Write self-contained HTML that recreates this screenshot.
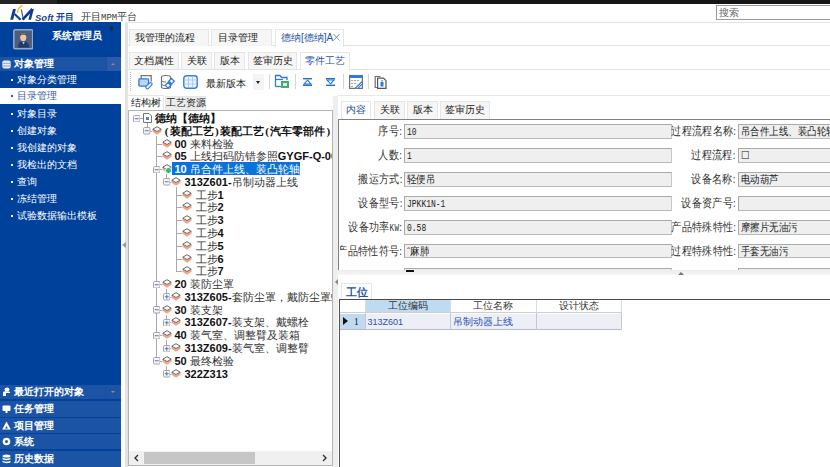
<!DOCTYPE html>
<html><head><meta charset="utf-8">
<style>
*{margin:0;padding:0;box-sizing:border-box}
html,body{width:830px;height:467px;overflow:hidden;background:#fff;font-family:"Liberation Sans",sans-serif;color:#222}
.a{position:absolute}
.sans{font-family:"Liberation Sans",sans-serif}
.serif{font-family:"Liberation Serif",serif}
#topbar{left:0;top:0;width:830px;height:4px;background:linear-gradient(90deg,#242424 0,#242424 57px,#161616 57px)}
#header{left:0;top:4px;width:830px;height:19px;background:#fff;border-bottom:1px solid #e4e4e4}
#side{left:0;top:22px;width:121px;height:445px;background:#00419b}
.sitem{left:0;width:121px;height:16px;color:#fff;font-size:9.5px;line-height:16px;padding-left:17px;white-space:nowrap}
.sitem:before{content:"";position:absolute;left:11px;top:7px;width:2px;height:2px;background:#fff}
.sitem.sel{background:#fff;color:#3a5aa8}
.sitem.sel:before{background:#3a5aa8}
.grp{left:0;width:121px;height:14px;background:#1c54a5;color:#fff;font-size:10px;font-weight:bold;line-height:14px;padding-left:14px;white-space:nowrap}
.tab{height:17px;background:#f6f6f6;border:1px solid #e6e6e6;border-bottom:none;font-size:10px;line-height:16px;text-align:center;color:#222;white-space:nowrap}
.tab.act{background:#fff;color:#1f56a8}
.tsep{width:1px;height:16px;background:#d8d8d8}
.trow{height:13px;font-size:11px;line-height:13px;white-space:nowrap;color:#222}
.trow b{font-weight:bold}
.lbl{font-family:"Liberation Serif",serif;font-size:10px;line-height:14px;text-align:right;color:#333;white-space:nowrap}
.inp{height:15px;background:#ececec;border:1px solid #b4b4b4;border-right-color:#d8d8d8;border-bottom-color:#d8d8d8;font-family:"Liberation Serif",serif;font-size:10px;line-height:13px;padding-left:2px;color:#222;white-space:nowrap;overflow:hidden}

.vl{width:1px;background:#a9a9a9}
.hl{height:1px;background:#a9a9a9}
.tr{height:14px;line-height:14px;font-size:11px;white-space:nowrap;color:#222}
.tr .cb{font-family:"Liberation Serif",serif;font-weight:bold;color:#111;font-size:10.5px}
.tr .cb2{font-family:"Liberation Serif",serif;font-weight:bold;color:#111;font-size:10px;letter-spacing:-0.1px}
.tr .pp{font-family:"Liberation Serif",serif;font-weight:bold;color:#111;font-size:11px;margin:0 1.3px}
.tr .c{font-family:"Liberation Serif",serif;color:#333;font-size:10.5px}
.tr .nb{font-family:"Liberation Sans",sans-serif;font-weight:bold;color:#111}
.tr .ns{font-family:"Liberation Sans",sans-serif;font-weight:bold;color:#fff}
.tr .cs{font-family:"Liberation Serif",serif;color:#fff;font-size:10.5px}

.flbl{height:15px;line-height:15px;font-family:"Liberation Serif",serif;font-size:11.5px;color:#333;white-space:nowrap;text-align:right;transform:scaleX(0.84);transform-origin:100% 50%;letter-spacing:0.3px}
.finp{height:14.5px;background:#efefef;border:1px solid #a9a9a9;border-right-color:#c8c8c8;border-bottom-color:#b8b8b8;line-height:9.5px;padding-left:2px;white-space:nowrap;overflow:hidden;color:#222}
.fm{font-family:"Liberation Mono",monospace;font-size:8px;display:inline-block;transform:scaleY(1.3);transform-origin:0 60%}
.kw{font-family:"Liberation Mono",monospace;font-size:9px;display:inline-block;transform:scaleY(1.3);transform-origin:0 70%}
.fc{font-family:"Liberation Serif",serif;font-size:11px;display:inline-block;transform:scaleX(0.86);transform-origin:0 50%}

.ghd{height:13px;border-right:1px solid #dcdcdc;border-bottom:1px solid #cfcfcf;font-family:"Liberation Serif",serif;font-size:9.5px;line-height:12px;text-align:center;color:#333;white-space:nowrap}
.gce{height:17px;border-right:1px solid #c4c8d0;border-bottom:1px solid #b8bcc6;background:#eceff6;box-shadow:inset 0 1px 0 #fafbfd;font-family:"Liberation Serif",serif;font-size:9.5px;line-height:18px;padding-left:2px;color:#2e50b0;white-space:nowrap}
.tbs{top:74px;width:1px;height:15px;background:#d6d6d6}
</style></head><body>
<svg width="0" height="0" style="position:absolute"><defs>
<g id="dia"><polygon points="0.5,3.2 5,5.8 9.5,3.2 9.5,5.8 5,8.8 0.5,5.8" fill="#f6a285"/><polygon points="5,0.7 9.2,3.2 5,5.5 0.8,3.2" fill="#fff" stroke="#666" stroke-width="1"/></g>
<g id="bxm"><rect x="0.5" y="0.5" width="6.5" height="6.5" rx="1" fill="#f6f6f6" stroke="#a4a4a4"/><line x1="1.8" y1="3.75" x2="5.7" y2="3.75" stroke="#5470c8" stroke-width="1"/></g>
<g id="bxp"><rect x="0.5" y="0.5" width="6.5" height="6.5" rx="1" fill="#f6f6f6" stroke="#a4a4a4"/><line x1="1.8" y1="3.75" x2="5.7" y2="3.75" stroke="#5470c8" stroke-width="1"/><line x1="3.75" y1="1.8" x2="3.75" y2="5.7" stroke="#5470c8" stroke-width="1"/></g>
<g id="doc"><path d="M0.5,0.5 H6 L8.5,3 V9.5 H0.5 Z" fill="#fff" stroke="#777"/><rect x="3" y="4" width="3" height="3" fill="#4a84d8"/></g>
</defs></svg>

<div id="topbar" class="a"></div>
<div id="header" class="a">
  <!-- logo -->
  <svg class="a" style="left:0;top:-4px" width="40" height="26" viewBox="0 0 40 26">
   <path d="M13,9 L15.9,9 L13.1,19.7 L10.2,19.7 Z" fill="#0f3a9a"/>
   <path d="M14.6,14 L20.6,19.7" stroke="#163f98" stroke-width="2.2"/>
   <path d="M21.3,9.6 L23.4,19.4" stroke="#2a52a8" stroke-width="1.1"/>
   <path d="M22.6,19.6 L32.4,9" stroke="#0f3a9a" stroke-width="2.6"/>
   <path d="M31.2,9 L33.8,9 L31,19.7 L28.4,19.7 Z" fill="#0f3a9a"/>
   <path d="M22.4,5.4 C19.5,6.8 17.8,9.5 17.4,12.9" fill="none" stroke="#f3c317" stroke-width="1.6"/>
  </svg>
<div class="a" style="left:35px;top:7.5px;height:12px;font-family:'Liberation Sans',sans-serif;font-style:italic;font-weight:bold;font-size:9.5px;line-height:12px;color:#163f98;white-space:nowrap">Soft</div>
  <div class="a" style="left:56px;top:7px;height:12px;font-family:'Liberation Sans',sans-serif;font-weight:bold;font-size:9px;line-height:12px;color:#163f98;white-space:nowrap">开目</div>
  <div class="a serif" style="left:81px;top:6.5px;font-size:9.5px;line-height:12px;color:#3a3a3a;white-space:nowrap">开目<span style="font-family:'Liberation Mono',monospace;font-size:9px">MPM</span>平台</div>
  <div class="a" style="left:716px;top:1px;width:120px;height:15px;border:1px solid #9a9a9a;border-right:none;background:#fff;font-family:'Liberation Serif',serif;font-size:10px;line-height:13px;color:#666;padding-left:2px">搜索</div>
</div>

<div id="side" class="a">
  <svg class="a" style="left:12.5px;top:7px" width="20.5" height="20.5" viewBox="0 0 20 20">
 <rect x="0.8" y="0.8" width="18.4" height="18.4" rx="1.2" fill="#4e5d7c" stroke="#93a7cc" stroke-width="1.5"/>
 <path d="M5,18 C5,13 7,12 10,12 C13,12 15,13 16,18 Z" fill="#1f3a72"/>
 <path d="M9,12.5 L10.3,15 L11.5,12.5 Z" fill="#c9ccd6"/>
 <ellipse cx="10" cy="8" rx="3" ry="3.8" fill="#f0c6a8"/>
 <path d="M6.8,7 C6.8,3.5 13.2,3.5 13.4,7 C12.8,5.8 11,5.3 10,5.5 C8.8,5.3 7.4,5.8 6.8,7 Z" fill="#2a2220"/>
</svg>
  <div class="a serif" style="left:52px;top:8px;font-size:10px;font-weight:bold;line-height:11px;color:#fff;white-space:nowrap;letter-spacing:0px">系统管理员</div>
  <div class="a grp" style="top:35px">对象管理</div>
  <div class="a" style="left:106px;top:35px;width:15px;height:14px;background:#2a5cab;border-left:1px solid #1b4ea0"></div>
<div class="a" style="left:111px;top:40.5px;width:0;height:0;border-left:2.5px solid transparent;border-right:2.5px solid transparent;border-bottom:2.5px solid #a88a60"></div>
<svg class="a" style="left:2px;top:37.5px" width="9" height="9" viewBox="0 0 9 9"><rect x="0.3" y="0.5" width="8.4" height="8" rx="2" fill="#e8edf8"/><path d="M0.3,3.3 H8.7 M0.3,6 H8.7" stroke="#7f98c8" stroke-width="0.9"/></svg>
<div class="a" style="left:110px;top:4px;width:3px;height:5px;border-radius:1.5px;background:#1b2a4a"></div>
  <div class="a sitem" style="top:49.5px">对象分类管理</div>
  <div class="a sitem sel" style="top:66px">目录管理</div>
  <div class="a sitem" style="top:83.5px">对象目录</div>
  <div class="a sitem" style="top:100.5px">创建对象</div>
  <div class="a sitem" style="top:117.5px">我创建的对象</div>
  <div class="a sitem" style="top:134.5px">我检出的文档</div>
  <div class="a sitem" style="top:151.5px">查询</div>
  <div class="a sitem" style="top:168.5px">冻结管理</div>
  <div class="a sitem" style="top:185.5px">试验数据输出模板</div>

  <div class="a grp" style="top:363px;height:14px;line-height:14px">最近打开的对象</div>
  <div class="a" style="left:105px;top:363px;width:1px;height:14px;background:#1b4ea0"></div>
  <div class="a" style="left:110.5px;top:369px;width:0;height:0;border-left:2.5px solid transparent;border-right:2.5px solid transparent;border-top:2.5px solid #a88a60"></div>
  <div class="a grp" style="top:379px;height:16px;line-height:16px">任务管理</div>
  <div class="a grp" style="top:396px;height:15px;line-height:15px">项目管理</div>
  <div class="a grp" style="top:412px;height:15px;line-height:15px">系统</div>
  <div class="a grp" style="top:429px;height:16px;line-height:16px">历史数据</div>
  <svg class="a" style="left:2px;top:365px" width="9" height="9" viewBox="0 0 9 9"><ellipse cx="5" cy="2.5" rx="2.5" ry="2" fill="#fff"/><path d="M1,9 V5 C1,4 8,4 8,5 V6 H4 V9 Z" fill="#fff"/></svg>
  <svg class="a" style="left:2px;top:383px" width="9" height="8" viewBox="0 0 9 8"><rect x="0.5" y="0.5" width="8" height="5.5" rx="1" fill="#fff"/><rect x="3.5" y="6" width="2" height="2" fill="#fff"/></svg>
  <svg class="a" style="left:2px;top:399px" width="9" height="9" viewBox="0 0 9 9"><path d="M4.5,0.5 L8.8,8.5 H0.2 Z" fill="#fff"/><path d="M4.5,5 L3,7.5 H6 Z" fill="#2256a6"/></svg>
  <svg class="a" style="left:2px;top:415px" width="9" height="9" viewBox="0 0 9 9"><circle cx="4.5" cy="4.5" r="3.8" fill="#fff"/><circle cx="4.5" cy="4.5" r="1.5" fill="#2256a6"/></svg>
  <svg class="a" style="left:2px;top:432px" width="9" height="10" viewBox="0 0 9 10"><ellipse cx="4.5" cy="2" rx="4" ry="1.6" fill="#fff"/><path d="M0.5,3.5 C0.5,5 8.5,5 8.5,3.5 V5 C8.5,6.5 0.5,6.5 0.5,5 Z M0.5,6.5 C0.5,8 8.5,8 8.5,6.5 V8 C8.5,9.6 0.5,9.6 0.5,8 Z" fill="#fff"/></svg>
</div>

<!-- splitter strip -->
<div class="a" style="left:121px;top:22px;width:7px;height:445px;background:#fff"></div>
<div class="a" style="left:125px;top:22px;width:3px;height:445px;background:#e2e2e2"></div>

<!-- tabs row 1 -->
<div class="a" style="left:128px;top:45px;width:702px;height:1px;background:#e2e2e2"></div>
<div class="a tab" style="left:129px;top:29px;width:80px;text-align:left;padding-left:5px">我管理的流程</div>
<div class="a tab" style="left:211px;top:29px;width:61px;text-align:left;padding-left:6px">目录管理</div>
<div class="a tab act" style="left:275px;top:29px;width:69px;height:18px;text-align:left;padding-left:5px">德纳[德纳]A</div><svg class="a" style="left:333px;top:33px" width="7" height="8" viewBox="0 0 7 8"><path d="M0.5,1 L6.5,7.5 M6.5,1 L0.5,7.5" stroke="#6a86b8" stroke-width="0.9"/></svg>

<!-- tabs row 2 -->
<div class="a" style="left:128px;top:69px;width:702px;height:1px;background:#e2e2e2"></div>
<div class="a tab" style="left:129px;top:52px;width:50px">文档属性</div>
<div class="a tab" style="left:181px;top:52px;width:31px">关联</div>
<div class="a tab" style="left:214px;top:52px;width:31px">版本</div>
<div class="a tab" style="left:248px;top:52px;width:49px">签审历史</div>
<div class="a tab act" style="left:300px;top:52px;width:50px;height:18px">零件工艺</div>

<!-- toolbar -->
<div class="a" style="left:130px;top:72px;width:1px;height:19px;border-left:1px dotted #b8b8b8"></div>
<svg class="a" style="left:137px;top:74px" width="16" height="16" viewBox="0 0 16 16">
 <path d="M4.2,5 V1.6 H14.2 V7.5" fill="none" stroke="#777" stroke-width="1.3"/>
 <rect x="1.9" y="4.9" width="9.6" height="7.2" rx="0.8" fill="#bcd6f8" stroke="#2f7ad8" stroke-width="1.3"/>
 <rect x="8.2" y="10.2" width="7.5" height="3" rx="1.5" transform="rotate(-45 11.9 11.7)" fill="#fff" stroke="#2f7ad8" stroke-width="1.1"/>
</svg>
<svg class="a" style="left:160px;top:74px" width="16" height="16" viewBox="0 0 16 16">
 <path d="M1.5,3 C1.5,1 10.5,1 10.5,3 V13 C10.5,15 1.5,15 1.5,13 Z" fill="#fff" stroke="#707070" stroke-width="1.2"/>
 <path d="M1.5,6.5 C1.5,8 6,8 6,8 M1.5,10 C1.5,11.5 5,11.5 5,11.5" fill="none" stroke="#707070" stroke-width="1"/>
 <path d="M11.5,4.5 L14.3,7.3 L11.5,10.1 L8.7,7.3 Z M8,8.5 L10.8,11.3 L8,14.1 L5.2,11.3 Z" fill="#fff" stroke="#2f7ad8" stroke-width="1.3"/>
 <path d="M9,10 L11,8" stroke="#2f7ad8" stroke-width="1.2"/>
</svg>
<svg class="a" style="left:183px;top:75px" width="15" height="14" viewBox="0 0 15 14">
 <path d="M3.5,0.8 H11.5 C13,0.8 14.2,2 14.2,3.5 V10.5 C14.2,12 13,13.2 11.5,13.2 H3.5 C2,13.2 0.8,12 0.8,10.5 V3.5 C0.8,2 2,0.8 3.5,0.8 Z" fill="#eef5fe" stroke="#3080dc" stroke-width="1.4"/>
 <path d="M1.5,5 H13.5 M1.5,9 H13.5 M5.5,1.5 V12.5 M9.5,1.5 V12.5" stroke="#a9ccf3" stroke-width="1"/>
</svg>
<div class="a" style="left:206px;top:76.5px;font-size:10px;line-height:14px;color:#222;white-space:nowrap">最新版本</div>
<div class="a" style="left:253px;top:73.5px;width:11px;height:16px;background:#f4f4f4"></div>
<div class="a" style="left:256px;top:81px;width:0;height:0;border-left:2.5px solid transparent;border-right:2.5px solid transparent;border-top:3px solid #222"></div>
<div class="a tbs" style="left:269px"></div>
<svg class="a" style="left:274px;top:74px" width="16" height="15" viewBox="0 0 16 15">
 <path d="M1.5,12.5 V1.5 H6 L7.5,3.5 H13 V6" fill="none" stroke="#2f7ad8" stroke-width="1.3"/>
 <path d="M1.5,5.5 H9" stroke="#2f7ad8" stroke-width="1.2"/>
 <rect x="7" y="7" width="8" height="7" fill="#3fae6e"/>
 <rect x="9" y="9" width="4" height="3" fill="#d8f3e2"/>
 <path d="M1.5,12.5 H7" stroke="#2f7ad8" stroke-width="1.3"/>
</svg>
<div class="a tbs" style="left:295px"></div>
<svg class="a" style="left:303px;top:78px" width="9" height="8" viewBox="0 0 9 8">
 <rect x="0" y="0" width="9" height="1.4" fill="#2070d0"/>
 <path d="M4.5,2.2 L8,6 H1 Z" fill="none" stroke="#2070d0" stroke-width="1.1"/>
 <rect x="0" y="6.6" width="9" height="1.4" fill="#2070d0"/>
</svg>
<svg class="a" style="left:325.5px;top:78px" width="9" height="8" viewBox="0 0 9 8">
 <rect x="0" y="0" width="9" height="1.4" fill="#2070d0"/>
 <path d="M4.5,5.8 L8,2 H1 Z" fill="none" stroke="#2070d0" stroke-width="1.1"/>
 <rect x="0" y="6.6" width="9" height="1.4" fill="#2070d0"/>
</svg>
<div class="a tbs" style="left:343px"></div>
<svg class="a" style="left:348.5px;top:74.5px" width="14" height="14" viewBox="0 0 14 14">
 <rect x="0.6" y="0.6" width="12.8" height="12.8" fill="#fff" stroke="#6f6f6f" stroke-width="1.2"/>
 <rect x="0" y="0" width="14" height="3" fill="#2f7ad8"/>
 <path d="M3,5 V6 M3,8 V9 M3,11 V12 M6,5 V6 M6,8 V9 M9,5 V6" stroke="#555" stroke-width="1"/>
 <path d="M6.5,13 L12.5,7 L13.8,8.3 L7.8,14.3 Z" fill="#fff" stroke="#2f7ad8" stroke-width="1.1"/>
</svg>
<div class="a tbs" style="left:368px"></div>
<svg class="a" style="left:374px;top:74.5px" width="13" height="14" viewBox="0 0 13 14">
 <path d="M3,12.5 H1.2 V1.5 H6.5" fill="none" stroke="#6f6f6f" stroke-width="1.2"/>
 <path d="M3.6,3.2 H9.5 L12,5.7 V13.3 H3.6 Z" fill="#fff" stroke="#555" stroke-width="1.2"/>
 <rect x="6.5" y="7" width="3" height="4.5" fill="#2f7ad8"/>
 <rect x="7.3" y="5.2" width="1.5" height="1.3" fill="#2f7ad8"/>
</svg>
<!-- left tabs -->
<div class="a tab serif" style="left:127px;top:95px;width:37px;height:15px;line-height:13px;background:#fff">结构树</div>
<div class="a tab serif" style="left:164.5px;top:96px;width:41.5px;height:14px;line-height:12px;background:#ececec">工艺资源</div>

<!-- tree box -->
<div class="a" style="left:333px;top:96px;width:5px;height:371px;background:#eeeeee"></div>
<div class="a" style="left:128px;top:110px;width:205px;height:356px;border:1px solid #b4b4b4;background:#fff"></div>

<div class="a" style="left:129px;top:111px;width:203px;height:354px;overflow:hidden">
<div class="a vl" style="left:27.00px;top:24.78px;height:225.04px"></div>
<div class="a vl" style="left:47.00px;top:75.90px;height:84.46px"></div>
<div class="a vl" style="left:17.50px;top:12.00px;height:4.78px"></div>
<div class="a vl" style="left:37.00px;top:63.12px;height:4.78px"></div>
<div class="a vl" style="left:37.00px;top:178.14px;height:4.78px"></div>
<div class="a vl" style="left:37.00px;top:203.70px;height:4.78px"></div>
<div class="a vl" style="left:37.00px;top:229.26px;height:4.78px"></div>
<div class="a vl" style="left:37.00px;top:254.82px;height:4.78px"></div>
<svg class="a" style="left:3.50px;top:3.50px" width="7.5" height="7.5"><use href="#bxm"/></svg>
<div class="a hl" style="left:11.00px;top:7.00px;width:2.50px"></div>
<svg class="a" style="left:13.50px;top:2.00px" width="9" height="10"><use href="#doc"/></svg>
<div class="a tr" style="left:25.50px;top:0.00px"><span class="cb">德纳【德纳】</span></div>
<svg class="a" style="left:14.00px;top:16.28px" width="7.5" height="7.5"><use href="#bxm"/></svg>
<div class="a hl" style="left:21.50px;top:19.78px;width:1.00px"></div>
<svg class="a" style="left:22.50px;top:14.78px" width="10" height="9"><use href="#dia"/></svg>
<div class="a tr" style="left:34.50px;top:12.78px"><span class="pp">(</span><span class="cb">装配工艺</span><span class="pp">)</span><span class="cb">装配工艺</span><span class="pp">(</span><span class="cb">汽车零部件</span><span class="pp">)</span></div>
<div class="a hl" style="left:27.00px;top:32.56px;width:5.50px"></div>
<svg class="a" style="left:32.50px;top:27.56px" width="10" height="9"><use href="#dia"/></svg>
<div class="a tr" style="left:45.50px;top:25.56px"><span class="nb">00 </span><span class="c">来料检验</span></div>
<div class="a hl" style="left:27.00px;top:45.34px;width:5.50px"></div>
<svg class="a" style="left:32.50px;top:40.34px" width="10" height="9"><use href="#dia"/></svg>
<div class="a tr" style="left:45.50px;top:38.34px"><span class="nb">05 </span><span class="c">上线扫码防错参照</span><span class="nb">GYGF-Q-00</span></div>
<svg class="a" style="left:23.50px;top:54.62px" width="7.5" height="7.5"><use href="#bxm"/></svg>
<div class="a hl" style="left:31.00px;top:58.12px;width:1.50px"></div>
<svg class="a" style="left:32.50px;top:53.12px" width="10" height="9"><use href="#dia"/></svg>
<div class="a" style="left:36.00px;top:56.12px;width:6.5px;height:6.5px;border-radius:50%;background:#36b889;border:1px solid #e8fff4"></div>
<div class="a" style="left:43.00px;top:51.20px;width:127.5px;height:13.2px;background:#0b72db"></div>
<div class="a tr" style="left:45.50px;top:51.12px"><span class="ns">10 </span><span class="cs">吊合件上线、装凸轮轴</span></div>
<svg class="a" style="left:33.50px;top:67.40px" width="7.5" height="7.5"><use href="#bxm"/></svg>
<div class="a hl" style="left:41.00px;top:70.90px;width:1.00px"></div>
<svg class="a" style="left:42.00px;top:65.90px" width="10" height="9"><use href="#dia"/></svg>
<div class="a tr" style="left:55.50px;top:63.90px"><span class="nb">313Z601-</span><span class="c">吊制动器上线</span></div>
<div class="a hl" style="left:47.00px;top:83.68px;width:5.50px"></div>
<svg class="a" style="left:52.50px;top:78.68px" width="10" height="9"><use href="#dia"/></svg>
<div class="a tr" style="left:66.50px;top:76.68px"><span class="c">工步</span><span class="nb">1</span></div>
<div class="a hl" style="left:47.00px;top:96.46px;width:5.50px"></div>
<svg class="a" style="left:52.50px;top:91.46px" width="10" height="9"><use href="#dia"/></svg>
<div class="a tr" style="left:66.50px;top:89.46px"><span class="c">工步</span><span class="nb">2</span></div>
<div class="a hl" style="left:47.00px;top:109.24px;width:5.50px"></div>
<svg class="a" style="left:52.50px;top:104.24px" width="10" height="9"><use href="#dia"/></svg>
<div class="a tr" style="left:66.50px;top:102.24px"><span class="c">工步</span><span class="nb">3</span></div>
<div class="a hl" style="left:47.00px;top:122.02px;width:5.50px"></div>
<svg class="a" style="left:52.50px;top:117.02px" width="10" height="9"><use href="#dia"/></svg>
<div class="a tr" style="left:66.50px;top:115.02px"><span class="c">工步</span><span class="nb">4</span></div>
<div class="a hl" style="left:47.00px;top:134.80px;width:5.50px"></div>
<svg class="a" style="left:52.50px;top:129.80px" width="10" height="9"><use href="#dia"/></svg>
<div class="a tr" style="left:66.50px;top:127.80px"><span class="c">工步</span><span class="nb">5</span></div>
<div class="a hl" style="left:47.00px;top:147.58px;width:5.50px"></div>
<svg class="a" style="left:52.50px;top:142.58px" width="10" height="9"><use href="#dia"/></svg>
<div class="a tr" style="left:66.50px;top:140.58px"><span class="c">工步</span><span class="nb">6</span></div>
<div class="a hl" style="left:47.00px;top:160.36px;width:5.50px"></div>
<svg class="a" style="left:52.50px;top:155.36px" width="10" height="9"><use href="#dia"/></svg>
<div class="a tr" style="left:66.50px;top:153.36px"><span class="c">工步</span><span class="nb">7</span></div>
<svg class="a" style="left:23.50px;top:169.64px" width="7.5" height="7.5"><use href="#bxm"/></svg>
<div class="a hl" style="left:31.00px;top:173.14px;width:1.50px"></div>
<svg class="a" style="left:32.50px;top:168.14px" width="10" height="9"><use href="#dia"/></svg>
<div class="a tr" style="left:45.50px;top:166.14px"><span class="nb">20 </span><span class="c">装防尘罩</span></div>
<svg class="a" style="left:33.50px;top:182.42px" width="7.5" height="7.5"><use href="#bxp"/></svg>
<div class="a hl" style="left:41.00px;top:185.92px;width:1.00px"></div>
<svg class="a" style="left:42.00px;top:180.92px" width="10" height="9"><use href="#dia"/></svg>
<div class="a tr" style="left:55.50px;top:178.92px"><span class="nb">313Z605-</span><span class="c">套防尘罩，戴防尘罩螺</span></div>
<svg class="a" style="left:23.50px;top:195.20px" width="7.5" height="7.5"><use href="#bxm"/></svg>
<div class="a hl" style="left:31.00px;top:198.70px;width:1.50px"></div>
<svg class="a" style="left:32.50px;top:193.70px" width="10" height="9"><use href="#dia"/></svg>
<div class="a tr" style="left:45.50px;top:191.70px"><span class="nb">30 </span><span class="c">装支架</span></div>
<svg class="a" style="left:33.50px;top:207.98px" width="7.5" height="7.5"><use href="#bxp"/></svg>
<div class="a hl" style="left:41.00px;top:211.48px;width:1.00px"></div>
<svg class="a" style="left:42.00px;top:206.48px" width="10" height="9"><use href="#dia"/></svg>
<div class="a tr" style="left:55.50px;top:204.48px"><span class="nb">313Z607-</span><span class="c">装支架、戴螺栓</span></div>
<svg class="a" style="left:23.50px;top:220.76px" width="7.5" height="7.5"><use href="#bxm"/></svg>
<div class="a hl" style="left:31.00px;top:224.26px;width:1.50px"></div>
<svg class="a" style="left:32.50px;top:219.26px" width="10" height="9"><use href="#dia"/></svg>
<div class="a tr" style="left:45.50px;top:217.26px"><span class="nb">40 </span><span class="c">装气室、调整臂及装箱</span></div>
<svg class="a" style="left:33.50px;top:233.54px" width="7.5" height="7.5"><use href="#bxp"/></svg>
<div class="a hl" style="left:41.00px;top:237.04px;width:1.00px"></div>
<svg class="a" style="left:42.00px;top:232.04px" width="10" height="9"><use href="#dia"/></svg>
<div class="a tr" style="left:55.50px;top:230.04px"><span class="nb">313Z609-</span><span class="c">装气室、调整臂</span></div>
<svg class="a" style="left:23.50px;top:246.32px" width="7.5" height="7.5"><use href="#bxm"/></svg>
<div class="a hl" style="left:31.00px;top:249.82px;width:1.50px"></div>
<svg class="a" style="left:32.50px;top:244.82px" width="10" height="9"><use href="#dia"/></svg>
<div class="a tr" style="left:45.50px;top:242.82px"><span class="nb">50 </span><span class="c">最终检验</span></div>
<svg class="a" style="left:33.50px;top:259.10px" width="7.5" height="7.5"><use href="#bxp"/></svg>
<div class="a hl" style="left:41.00px;top:262.60px;width:1.00px"></div>
<svg class="a" style="left:42.00px;top:257.60px" width="10" height="9"><use href="#dia"/></svg>
<div class="a tr" style="left:55.50px;top:255.60px"><span class="nb">322Z313</span></div>
</div>
<!-- tree hscroll -->
<div class="a" style="left:129px;top:451px;width:203px;height:14px;background:#f0f0f0"></div>
<div class="a" style="left:144px;top:452px;width:110.5px;height:12px;background:#c6c6c6"></div>
<svg class="a" style="left:133px;top:454px" width="7" height="8" viewBox="0 0 7 8"><path d="M5,1 L2,4 L5,7" fill="none" stroke="#333" stroke-width="1.4"/></svg>
<svg class="a" style="left:321px;top:454px" width="7" height="8" viewBox="0 0 7 8"><path d="M2,1 L5,4 L2,7" fill="none" stroke="#333" stroke-width="1.4"/></svg>
<!-- splitter arrows -->
<div class="a" style="left:122px;top:242px;width:0;height:0;border-top:3.5px solid transparent;border-bottom:3.5px solid transparent;border-right:4.5px solid #9a9a9a"></div>
<div class="a" style="left:335px;top:279px;width:0;height:0;border-top:3px solid transparent;border-bottom:3px solid transparent;border-right:3px solid #8a8a8a"></div>

<div class="a" style="left:338px;top:95px;width:492px;height:1px;background:#e8e8e8"></div>
<!-- content tabs -->
<div class="a tab act" style="left:341px;top:101px;width:30px;height:18px">内容</div>
<div class="a tab" style="left:374px;top:101px;width:31px;height:18px">关联</div>
<div class="a tab" style="left:407px;top:101px;width:31px;height:18px">版本</div>
<div class="a tab" style="left:440px;top:101px;width:50px;height:18px">签审历史</div>

<!-- form panel -->
<div class="a" style="left:338px;top:119px;width:500px;height:152px;border:1.5px solid #828282;border-right:none;border-bottom:none;background:#fff"></div>

<div class="a" style="left:340px;top:120px;width:490px;height:150px;overflow:hidden"><div class="a" style="left:-340px;top:-120px;width:830px;height:467px"><div class="a flbl" style="right:427.50px;top:124.00px">序号:</div>
<div class="a finp" style="left:404.00px;top:124.00px;width:268.00px"><span class="fm">10</span></div>
<div class="a flbl" style="right:94.00px;top:124.00px">过程流程名称:</div>
<div class="a finp" style="left:737.50px;top:124.00px;width:100.00px"><span class="fc">吊合件上线、装凸轮轴</span></div>
<div class="a flbl" style="right:427.50px;top:148.00px">人数:</div>
<div class="a finp" style="left:404.00px;top:148.00px;width:268.00px"><span class="fm">1</span></div>
<div class="a flbl" style="right:94.00px;top:148.00px">过程流程:</div>
<div class="a finp" style="left:737.50px;top:148.00px;width:100.00px"><span class="fc">☐</span></div>
<div class="a flbl" style="right:427.50px;top:172.00px">搬运方式:</div>
<div class="a finp" style="left:404.00px;top:172.00px;width:268.00px"><span class="fc">轻便吊</span></div>
<div class="a flbl" style="right:94.00px;top:172.00px">设备名称:</div>
<div class="a finp" style="left:737.50px;top:172.00px;width:100.00px"><span class="fc">电动葫芦</span></div>
<div class="a flbl" style="right:427.50px;top:196.00px">设备型号:</div>
<div class="a finp" style="left:404.00px;top:196.00px;width:268.00px"><span class="fm">JPKK1N-1</span></div>
<div class="a flbl" style="right:94.00px;top:196.00px">设备资产号:</div>
<div class="a finp" style="left:737.50px;top:196.00px;width:100.00px"><span class="fc"></span></div>
<div class="a flbl" style="right:427.50px;top:220.00px">设备功率<span class="kw">KW</span>:</div>
<div class="a finp" style="left:404.00px;top:220.00px;width:268.00px"><span class="fm">0.58</span></div>
<div class="a flbl" style="right:94.00px;top:220.00px">产品特殊特性:</div>
<div class="a finp" style="left:737.50px;top:220.00px;width:100.00px"><span class="fc">摩擦片无油污</span></div>
<div class="a flbl" style="right:427.50px;top:243.50px">产品特性符号:</div>
<div class="a finp" style="left:404.00px;top:243.50px;width:268.00px"><span class="fc">ˆ麻肺</span></div>
<div class="a flbl" style="right:94.00px;top:243.50px">过程特殊特性:</div>
<div class="a finp" style="left:737.50px;top:243.50px;width:100.00px"><span class="fc">手套无油污</span></div>
<div class="a finp" style="left:404.00px;top:267.50px;width:268.00px"><span class="fm"></span></div>
<div class="a finp" style="left:737.50px;top:267.50px;width:100.00px"><span class="fc"></span></div></div></div>
<div class="a" style="left:338px;top:270px;width:492px;height:5px;background:linear-gradient(#ececec,#f6f6f6)"></div>
<div class="a" style="left:406px;top:269.5px;width:8px;height:2px;background:#111"></div>
<div class="a" style="z-index:5;left:677.5px;top:272px;width:0;height:0;border-left:3px solid transparent;border-right:3px solid transparent;border-bottom:3px solid #777"></div>
<!-- work tab -->
<div class="a tab act" style="left:341px;top:283px;width:31px;height:16px;line-height:16px;font-size:10.5px;font-weight:bold;color:#2552a6">工位</div>
<div class="a" style="left:338.5px;top:298.5px;width:492px;height:169px;border-top:1.5px solid #4a4a4a;border-left:1.5px solid #555;background:#fff"></div>
<div class="a" style="left:340px;top:300px;width:282px;height:30px">
  <div class="a ghd" style="left:0;top:0;width:25.5px;background:#fff"></div>
  <div class="a ghd" style="left:25.5px;top:0;width:85.5px;background:#bfdbf3">工位编码</div>
  <div class="a ghd" style="left:111px;top:0;width:85.5px">工位名称</div>
  <div class="a ghd" style="left:196.5px;top:0;width:85.5px">设计状态</div>
  <div class="a gce" style="left:0;top:13px;width:25.5px;background:#bfdaf1;color:#111"><span style="position:absolute;left:3px;top:4px;width:0;height:0;border-left:5px solid #111;border-top:4px solid transparent;border-bottom:4px solid transparent"></span><span style="position:absolute;left:14px;top:0;font-family:'Liberation Serif',serif">1</span></div>
  <div class="a gce" style="left:25.5px;top:13px;width:85.5px;font-family:'Liberation Sans',sans-serif;font-size:9px">313Z601</div>
  <div class="a gce" style="left:111px;top:13px;width:85.5px">吊制动器上线</div>
  <div class="a gce" style="left:196.5px;top:13px;width:85.5px"></div>
</div>
</body></html>
